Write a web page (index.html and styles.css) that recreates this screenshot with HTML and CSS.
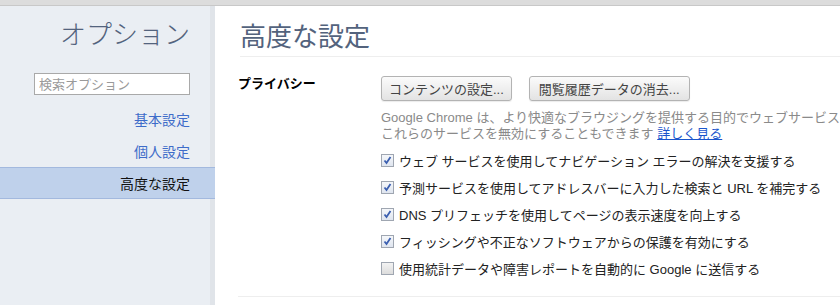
FILE: index.html
```html
<!DOCTYPE html>
<html lang="ja">
<head>
<meta charset="utf-8">
<title>オプション</title>
<link rel="stylesheet" href="styles.css">
</head>
<body>
<div class="topbar"></div>
<div class="page">
  <nav class="sidebar">
    <h1 class="side-title">オプション</h1>
    <div class="search-wrap"><input class="search" type="text" placeholder="検索オプション"></div>
    <ul class="nav">
      <li class="nav-item"><a class="nav-link">基本設定</a></li>
      <li class="nav-item"><a class="nav-link">個人設定</a></li>
      <li class="nav-item selected"><a class="nav-link">高度な設定</a></li>
    </ul>
  </nav>
  <main class="main">
    <h2 class="main-title">高度な設定</h2>
    <section class="section">
      <h3 class="section-label">プライバシー</h3>
      <div class="section-body">
        <div class="buttons">
          <button class="btn">コンテンツの設定...</button>
          <button class="btn">閲覧履歴データの消去...</button>
        </div>
        <p class="desc">Google Chrome は、より快適なブラウジングを提供する目的でウェブサービスを使用することがあります。<br>これらのサービスを無効にすることもできます <a class="link">詳しく見る</a></p>
        <ul class="checks">
          <li class="check"><span class="box on"><svg viewBox="0 0 13 13" width="13" height="13"><path d="M3.5 6.5 L5.5 9 L9.5 3" fill="none" stroke="#3b5fb0" stroke-width="1.8"/></svg></span>ウェブ サービスを使用してナビゲーション エラーの解決を支援する</li>
          <li class="check"><span class="box on"><svg viewBox="0 0 13 13" width="13" height="13"><path d="M3.5 6.5 L5.5 9 L9.5 3" fill="none" stroke="#3b5fb0" stroke-width="1.8"/></svg></span>予測サービスを使用してアドレスバーに入力した検索と URL を補完する</li>
          <li class="check"><span class="box on"><svg viewBox="0 0 13 13" width="13" height="13"><path d="M3.5 6.5 L5.5 9 L9.5 3" fill="none" stroke="#3b5fb0" stroke-width="1.8"/></svg></span>DNS プリフェッチを使用してページの表示速度を向上する</li>
          <li class="check"><span class="box on"><svg viewBox="0 0 13 13" width="13" height="13"><path d="M3.5 6.5 L5.5 9 L9.5 3" fill="none" stroke="#3b5fb0" stroke-width="1.8"/></svg></span>フィッシングや不正なソフトウェアからの保護を有効にする</li>
          <li class="check"><span class="box"></span>使用統計データや障害レポートを自動的に Google に送信する</li>
        </ul>
      </div>
    </section>
    <div class="bottom-sep"></div>
  </main>
</div>
</body>
</html>
```

FILE: styles.css
```css
* { box-sizing: border-box; }
html, body {
  margin: 0;
  padding: 0;
  height: 100%;
  overflow: hidden;
}
body {
  font-family: "Liberation Sans", Arial, "Noto Sans CJK JP", sans-serif;
  font-size: 13px;
  color: #222;
  background: #fff;
}
.topbar {
  height: 6px;
  background: #dcdcdc;
  border-bottom: 1px solid #c8c8c8;
}
.page {
  display: flex;
  height: calc(100% - 6px);
}
.sidebar {
  width: 215px;
  flex: none;
  background: #eaeef3;
  border-right: 5px solid #e0e4e9;
  padding-top: 13px;
}
.side-title {
  margin: 0;
  padding-right: 20px;
  text-align: right;
  font-weight: 300;
  font-size: 26px;
  line-height: 32px;
  color: #53637d;
}
.search-wrap {
  padding: 22px 20px 0 34px;
}
.search {
  display: block;
  width: 156px;
  height: 22px;
  border: 1px solid #a9a9a9;
  background: #fff;
  padding: 0 4px;
  font-family: "Liberation Sans", "Noto Sans CJK JP", sans-serif;
  font-size: 13px;
}
.search::placeholder { color: #9a9a9a; }
.nav {
  list-style: none;
  margin: 8px 0 0;
  padding: 0;
}
.nav-item {
  height: 32px;
  display: flex;
  align-items: center;
  justify-content: flex-end;
  padding-right: 20px;
  font-size: 14px;
}
.nav-link { color: #3e6cc9; }
.nav-item.selected {
  background: #bfd1eb;
  border-top: 1px solid #a3b9de;
  border-bottom: 1px solid #a3b9de;
  margin-right: -5px;
  padding-right: 25px;
}
.nav-item.selected .nav-link { color: #111; }
.main {
  flex: 1;
  min-width: 0;
  padding: 15px 0 0 23px;
  white-space: nowrap;
  overflow: hidden;
}
.main-title {
  margin: 0 0 0 2px;
  font-weight: normal;
  font-size: 26px;
  line-height: 32px;
  color: #53637d;
  padding-bottom: 3px;
  border-bottom: 1px solid #eeeeee;
}
.section {
  display: flex;
  padding-top: 19px;
}
.section-label {
  width: 143px;
  flex: none;
  margin: 0;
  font-size: 13px;
  font-weight: bold;
  color: #000;
  line-height: 16px;
}
.section-body { flex: 1; min-width: 0; }
.buttons {
  display: flex;
  gap: 17px;
  margin-top: 0;
}
.btn {
  height: 25px;
  padding: 0 7px;
  border: 1px solid #b3b3b3;
  border-radius: 3px;
  background: linear-gradient(#fbfbfb, #e3e3e3);
  font-family: "Liberation Sans", "Noto Sans CJK JP", sans-serif;
  font-size: 13px;
  color: #444;
  box-shadow: 0 1px 1px rgba(0,0,0,0.08);
}
.btn + .btn { padding: 0 9px; }
.desc {
  margin: 9px 0 0;
  color: #8a8a8a;
  line-height: 16px;
}
.link {
  color: #1a55cc;
  text-decoration: underline;
}
.checks {
  list-style: none;
  margin: 5px 0 0;
  padding: 0;
}
.check {
  height: 27px;
  display: flex;
  align-items: center;
  color: #222;
}
.box {
  width: 13px;
  height: 13px;
  flex: none;
  margin-right: 5px;
  border: 1px solid #9fa6b1;
  background: linear-gradient(#f3f3f3, #dcdcdc);
  display: flex;
  align-items: center;
  justify-content: center;
}
.box svg { display: block; margin: -1px; }
.box.on { background: linear-gradient(#f5f7fa, #dfe5ef); }
.bottom-sep {
  border-top: 1px solid #eeeeee;
  margin-top: 14px;
}
```
